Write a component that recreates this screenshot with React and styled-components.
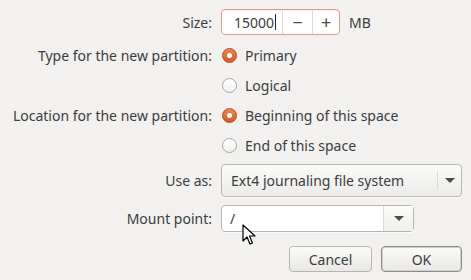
import React from 'react';
import styled, { createGlobalStyle } from 'styled-components';

const Global = createGlobalStyle`
  html, body {
    margin: 0;
    padding: 0;
    background: #f2f1f0;
  }
  body {
    font-family: 'Noto Sans', 'DejaVu Sans', sans-serif;
    font-size: 14px;
    color: #3c3c3c;
  }
`;

const Dialog = styled.div`
  position: relative;
  width: 471px;
  height: 280px;
  padding-top: 9px;
  box-sizing: border-box;
  display: flex;
  flex-direction: column;
`;

const Row = styled.div`
  display: grid;
  grid-template-columns: 212px 1fr;
  column-gap: 9px;
  align-items: center;
  height: ${p => p.h}px;
  margin-top: ${p => p.mt || 0}px;
`;

const Label = styled.div`
  text-align: right;
  white-space: nowrap;
`;

const Content = styled.div`
  display: flex;
  align-items: center;
`;

const Spin = styled.div`
  display: flex;
  width: 119px;
  height: 26px;
  box-sizing: border-box;
  border: 1px solid #e89a7c;
  border-radius: 4px;
  background: #fff;
  box-shadow: inset 0 1px 1px rgba(0,0,0,0.06);
`;

const SpinValue = styled.div`
  width: 61px;
  display: flex;
  align-items: center;
  justify-content: flex-end;
  padding-right: 6px;
  box-sizing: border-box;
  color: #3c3c3c;
`;

const Caret = styled.span`
  display: inline-block;
  width: 1px;
  height: 16px;
  background: #222;
  margin-left: 1px;
`;

const SpinBtn = styled.div`
  width: ${p => p.w}px;
  border-left: 1px solid #dedbd8;
  display: flex;
  align-items: center;
  justify-content: center;
  font-size: 18px;
  color: #4c4c4c;
`;

const Unit = styled.span`
  margin-left: 9px;
`;

const RadioCircle = styled.span`
  width: 15px;
  height: 15px;
  box-sizing: border-box;
  border-radius: 50%;
  margin-left: 1px;
  margin-right: 8px;
  display: flex;
  align-items: center;
  justify-content: center;
  border: 1px solid ${p => (p.on ? '#b84a1c' : '#a9a6a2')};
  background: ${p =>
    p.on
      ? 'linear-gradient(#ee8659, #d45a26)'
      : 'linear-gradient(#ffffff, #f0efee)'};
  &::after {
    content: '';
    display: ${p => (p.on ? 'block' : 'none')};
    width: 5px;
    height: 5px;
    border-radius: 50%;
    background: #fff;
  }
`;

const Combo = styled.div`
  display: flex;
  align-items: stretch;
  width: ${p => p.w}px;
  height: ${p => p.h}px;
  box-sizing: border-box;
  border: 1px solid #b8b5b1;
  border-radius: 4px;
  background: ${p => (p.entry ? '#fff' : 'linear-gradient(#fbfbfa, #ecebe9)')};
  box-shadow: 0 1px 0 rgba(255,255,255,0.8);
`;

const ComboText = styled.div`
  flex: 1;
  display: flex;
  align-items: center;
  padding-left: ${p => p.pl}px;
`;

const ComboArrow = styled.div`
  width: ${p => p.w}px;
  display: flex;
  align-items: center;
  justify-content: center;
  border-left: 1px solid #dcd9d6;
  margin: ${p => p.m}px 0;
  background: ${p => (p.entry ? 'linear-gradient(#fbfbfa, #efeeec)' : 'transparent')};
  &::after {
    content: '';
    border-left: 5px solid transparent;
    border-right: 5px solid transparent;
    border-top: 5px solid #4c4c4c;
  }
`;

const Buttons = styled.div`
  display: flex;
  justify-content: flex-end;
  gap: 9px;
  padding-right: 9px;
  margin-top: 14px;
`;

const Button = styled.div`
  width: ${p => (p.primary ? 81 : 83)}px;
  height: 26px;
  box-sizing: border-box;
  border: 1px solid ${p => (p.primary ? '#8f8c88' : '#b8b5b1')};
  border-radius: 4px;
  background: linear-gradient(#fbfbfa, #e9e8e6);
  box-shadow: ${p => (p.primary ? 'inset 0 0 0 1px #d2d0cd' : 'none')};
  display: flex;
  align-items: center;
  justify-content: center;
`;

const Pointer = styled.svg`
  position: absolute;
  left: 242px;
  top: 224px;
`;

const Radio = ({ on, children }) => (
  <Content>
    <RadioCircle on={on ? 1 : 0} />
    {children}
  </Content>
);

export default function App() {
  return (
    <>
      <Global />
      <Dialog>
        <Row h={26}>
          <Label>Size:</Label>
          <Content>
            <Spin>
              <SpinValue>15000<Caret /></SpinValue>
              <SpinBtn w={30}>−</SpinBtn>
              <SpinBtn w={26}>+</SpinBtn>
            </Spin>
            <Unit>MB</Unit>
          </Content>
        </Row>
        <Row h={30} mt={5}>
          <Label>Type for the new partition:</Label>
          <Radio on>Primary</Radio>
        </Row>
        <Row h={30}>
          <Label />
          <Radio>Logical</Radio>
        </Row>
        <Row h={30}>
          <Label>Location for the new partition:</Label>
          <Radio on>Beginning of this space</Radio>
        </Row>
        <Row h={30}>
          <Label />
          <Radio>End of this space</Radio>
        </Row>
        <Row h={33} mt={4}>
          <Label>Use as:</Label>
          <Content>
            <Combo w={241} h={33}>
              <ComboText pl={9}>Ext4 journaling file system</ComboText>
              <ComboArrow w={23} m={6} />
            </Combo>
          </Content>
        </Row>
        <Row h={27} mt={8}>
          <Label>Mount point:</Label>
          <Content>
            <Combo w={193} h={27} entry>
              <ComboText pl={8}>/</ComboText>
              <ComboArrow w={29} m={0} entry />
            </Combo>
          </Content>
        </Row>
        <Buttons>
          <Button>Cancel</Button>
          <Button primary>OK</Button>
        </Buttons>
        <Pointer width="14" height="22" viewBox="0 0 14 22">
          <path d="M1 1 L1 17 L5 13 L8 20 L10.5 19 L7.5 12 L13 12 Z" fill="#fff" stroke="#000" strokeWidth="1.2" strokeLinejoin="round" />
        </Pointer>
      </Dialog>
    </>
  );
}
